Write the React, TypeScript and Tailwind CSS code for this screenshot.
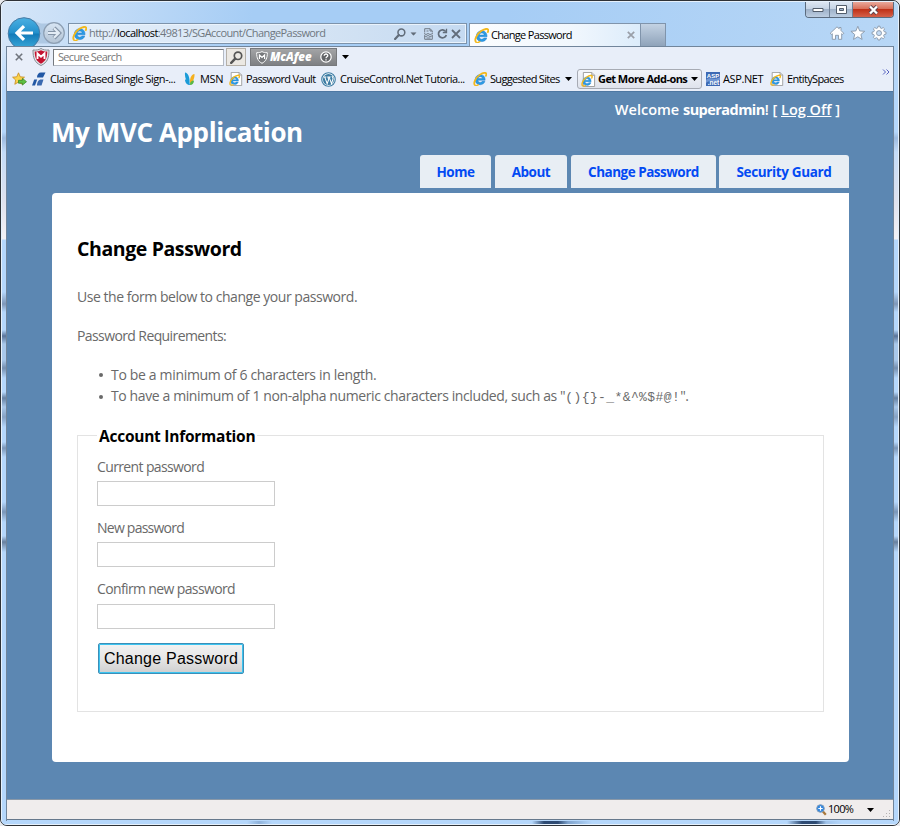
import React from "react";

function IeIcon({ s = 14, page = false }: { s?: number; page?: boolean }) {
  return (
    <svg width={s} height={s} viewBox="0 0 16 16" className="shrink-0">
      {page && <path d="M2.5.5h9l3 3v12h-12z" fill="#fff" stroke="#9a9a9a" />}
      {page && <path d="M11.5.5v3h3" fill="#ddd" stroke="#9a9a9a" />}
      <g transform={page ? "translate(0 3) scale(.78)" : ""}>
        <path d="M13.9 9.4H5.6c.1 1.6 1.2 2.5 2.7 2.5 1 0 1.8-.4 2.2-1.2h3.1c-.7 2.4-2.700 3.8-5.300 3.800-3.500 0-5.800-2.300-5.800-5.700S4.900 3 8.300 3c3.600 0 5.700 2.500 5.600 6.400zM5.700 7.400h5.100C10.700 6.100 9.700 5.300 8.300 5.300S5.900 6.100 5.700 7.400z" fill="#2b9be3" stroke="#1a78cc" strokeWidth=".5" />
        <path d="M2.300 15.200C-.2 12.800 3 6.300 8 3c3.500-2.300 6.800-2.700 7.200-.9.200.9-.3 2.100-1 3" fill="none" stroke="#f2b81c" strokeWidth="2" />
        <path d="M2.300 15.200c1 .7 2.700.2 4.400-.9" fill="none" stroke="#f2b81c" strokeWidth="1.500" />
      </g>
    </svg>
  );
}

function Caret({ c = "" }: { c?: string }) {
  return <svg width="7" height="4" viewBox="0 0 7 4" className={"shrink-0 " + c}><path d="M0 0h7L3.500 4z" fill="currentColor" /></svg>;
}

function Magnifier({ c = "", s = 13 }: { c?: string; s?: number }) {
  return (
    <svg width={s} height={s} viewBox="0 0 13 13" className={"shrink-0 " + c} fill="none" stroke="currentColor">
      <circle cx="8" cy="4.800" r="3.700" strokeWidth="1.700" />
      <path d="M5.200 7.600L1.200 11.800" strokeWidth="2.400" strokeLinecap="round" />
    </svg>
  );
}

function NavButtons() {
  return (
    <svg width="61" height="46" viewBox="0 0 61 46" className="shrink-0">
      <defs>
        <linearGradient id="back" x1="0" y1="0" x2="0" y2="1">
          <stop offset="0" stopColor="#4bb0e2" />
          <stop offset=".48" stopColor="#2390cc" />
          <stop offset=".52" stopColor="#137bb9" />
          <stop offset="1" stopColor="#3cabdb" />
        </linearGradient>
        <linearGradient id="fwd" x1="0" y1="0" x2="0" y2="1">
          <stop offset="0" stopColor="#d8e6f4" />
          <stop offset="1" stopColor="#b3c3d4" />
        </linearGradient>
      </defs>
      <path d="M17 16c9-1 12 5 18 5.500h18v20H17z" fill="#8aaaca" opacity=".45" />
      <circle cx="17" cy="31.500" r="15.800" fill="url(#back)" stroke="#467ba5" />
      <path d="M26 31H11M17 24.200L10 31l7 6.800" fill="none" stroke="#fff" strokeWidth="3.200" />
      <circle cx="47" cy="31" r="10.300" fill="url(#fwd)" stroke="#8d9fb3" strokeWidth="1.200" />
      <path d="M41 31h9M47 26l5 5-5 5" fill="none" stroke="#8494a7" strokeWidth="4.200" />
      <path d="M41 31h10M47 26.300l4.800 4.700-4.800 4.700" fill="none" stroke="#e3ecf5" strokeWidth="2.200" />
    </svg>
  );
}

function WindowControls() {
  return (
    <div className="flex h-[16px] w-[89px] overflow-hidden rounded-b-[4px] border border-t-0 border-[#5b6b7e]">
      <div className="flex w-[24px] items-center justify-center border-r border-[#6f8095] bg-[linear-gradient(#dce6f2_0%,#c5d3e4_45%,#9fb2c9_50%,#bccde1_100%)]">
        <svg width="12" height="6" viewBox="0 0 12 6"><path d="M1 1.500h10v3H1z" fill="#fff" stroke="#525d6b" /></svg>
      </div>
      <div className="flex w-[23px] items-center justify-center border-r border-[#6f8095] bg-[linear-gradient(#dce6f2_0%,#c5d3e4_45%,#9fb2c9_50%,#bccde1_100%)]">
        <svg width="11" height="9" viewBox="0 0 11 9"><path d="M.5.5h10v8H.5z" fill="#fff" stroke="#525d6b" /><path d="M3.500 3.500h4v2h-4z" fill="#9fb2c9" stroke="#525d6b" /></svg>
      </div>
      <div className="flex flex-1 items-center justify-center bg-[linear-gradient(#e9a99b_0%,#d9705a_45%,#bf3118_50%,#d5614a_100%)]">
        <svg width="11" height="10" viewBox="0 0 11 10"><path d="M2 1.500l7 7M9 1.500l-7 7" stroke="#5b4450" strokeWidth="4" /><path d="M2 1.500l7 7M9 1.500l-7 7" stroke="#fff" strokeWidth="2.300" /></svg>
      </div>
    </div>
  );
}

function CommandIcons() {
  return (
    <svg width="58" height="16" viewBox="0 0 58 16" fill="#fdfeff" stroke="#8896a8" strokeWidth=".9" strokeLinejoin="round">
      <path d="M1.200 8.300L8 1.800l2.200 2V2.500h1.800v3l2.800 2.800-1.300 1.100-.8-.7v5.600H9.500v-4h-3v4H3.300V8.700l-.8.700z" />
      <path d="M28.800 1.300l1.900 4.600 5 .4-3.800 3.200 1.200 4.900-4.300-2.600-4.300 2.600 1.200-4.900-3.800-3.200 5-.4z" />
      <path d="M49 1.200h2l.4 1.800 1.300.5 1.500-1 1.400 1.400-1 1.500.6 1.300 1.800.4v2l-1.800.4-.6 1.300 1 1.500-1.400 1.400-1.500-1-1.300.6-.4 1.700h-2l-.4-1.700-1.300-.6-1.500 1-1.400-1.400 1-1.500-.6-1.300-1.700-.4v-2l1.700-.4.6-1.300-1-1.500 1.400-1.400 1.500 1 1.300-.5z" />
      <circle cx="50" cy="8.100" r="2.500" fill="#c4dcf6" />
    </svg>
  );
}

function TitleBar() {
  return (
    <div className="flex h-[45px] items-start">
      <NavButtons />
      <div className="mt-[21px] flex h-[21px] w-[399px] items-center border border-[#7d93ab] bg-[linear-gradient(90deg,#e3eefa,#d5e4f4_60%,#c5daf1)] pl-[3px] shadow-[inset_0_0_0_1px_#eaf3fc]">
        <IeIcon s={15} />
        <span className="ml-[2px] w-[305px] whitespace-nowrap text-[11px] tracking-[-0.6px] text-[#6f7780]">
          http://<span className="text-black">localhost</span>:49813/SGAccount/ChangePassword
        </span>
        <Magnifier c="text-[#626d7a]" s={12} />
        <Caret c="ml-[4px] text-[#626d7a] scale-90" />
        <svg width="9" height="12" viewBox="0 0 9 12" className="ml-[7px] shrink-0" fill="none" stroke="#727c88"><path d="M.7 4.500V.7h5.500L8.300 3v1.500M.7 8v3.300h7.600V8M0 5.500l2 1 2-1 2 1 3-1M0 7.500l2 1 2-1 2 1 3-1M6 1v2h2M2.500 3h2M2.500 10h4" /></svg>
        <svg width="11" height="12" viewBox="0 0 11 12" className="ml-[4px] shrink-0" fill="none" stroke="#626d7a" strokeWidth="1.700"><path d="M8.800 3.600A4 4 0 1 0 9.300 7" /><path d="M9.500.8v3.700H5.800" strokeWidth="1.300" /></svg>
        <svg width="10" height="10" viewBox="0 0 10 10" className="ml-[3px] shrink-0" stroke="#626d7a" strokeWidth="1.800"><path d="M1 1l8 8M9 1L1 9" /></svg>
      </div>
      <div className="ml-[2px] mt-[21px] flex h-[23px] w-[172px] items-center border border-b-0 border-[#8094ab] bg-[linear-gradient(90deg,#fbfdff,#f1f7fd_60%,#dcecfb)] pl-[4px]">
        <IeIcon s={15} />
        <span className="ml-[2px] w-[136px] whitespace-nowrap text-[11px] tracking-[-0.68px] text-black">Change Password</span>
        <svg width="8" height="8" viewBox="0 0 8 8" className="shrink-0" stroke="#9a9fa8" strokeWidth="1.700"><path d="M.8.800l6.400 6.400M7.200.8L.8 7.200" /></svg>
      </div>
      <div className="mt-[21px] h-[23px] w-[25px] border border-b-0 border-l-0 border-[#8094ab] bg-[linear-gradient(#c3d2e3,#8fa3ba)]" />
      <div className="ml-auto flex flex-col items-end">
        <WindowControls />
        <div className="mr-[7px] mt-[7px] h-[16px]"><CommandIcons /></div>
      </div>
    </div>
  );
}

function SearchRow() {
  return (
    <div className="flex h-[20px] items-center">
      <svg width="8" height="8" viewBox="0 0 8 8" className="ml-[8px]" stroke="#70757d" strokeWidth="1.600"><path d="M.8.800l6.400 6.400M7.200.8L.8 7.200" /></svg>
      <svg width="18" height="18" viewBox="0 0 18 18" className="ml-[9px]">
        <path d="M9 .5c2 1.400 4.800 1.800 8 1.500 0 8-1.500 12.500-8 15.500C2.500 14.500 1 10 1 2c3.200.3 6-.1 8-1.500z" fill="#e2e4e8" stroke="#858a92" />
        <path d="M9 2.200c1.800 1 4 1.400 6.300 1.300-.2 6.300-1.600 9.700-6.300 12.200C4.300 13.200 2.900 9.800 2.700 3.500 5 3.600 7.200 3.200 9 2.200z" fill="#c3122f" />
        <path d="M5.500 11V5.500L9 8.800l3.500-3.300V11" fill="none" stroke="#fff" strokeWidth="1.900" />
      </svg>
      <div className="ml-[3px] flex h-[17px] w-[171px] items-center border border-[#b4bac4] border-l-[#75797f] border-t-[#75797f] bg-white pl-[4px] text-[11px] tracking-[-0.7px] text-[#777]">Secure Search</div>
      <div className="ml-[2px] flex h-[18px] w-[20px] items-center justify-center border border-[#b5b0a8] bg-[#ebe8e3]"><Magnifier c="text-[#555]" /></div>
      <div className="ml-[4px] flex h-[18px] w-[87px] items-center border border-[#77797c] bg-[linear-gradient(#a3a4a6,#7e8083)] pl-[5px]">
        <svg width="12" height="13" viewBox="0 0 12 13"><path d="M6 .6c1.500.9 3.200 1.200 5.300 1.100 0 5.500-1.300 8.500-5.300 10.600C2 10.200.7 7.200.7 1.700 2.800 1.800 4.500 1.500 6 .6z" fill="#77797c" stroke="#fff" /><path d="M3.400 8V4L6 6.500 8.600 4v4" fill="none" stroke="#fff" strokeWidth="1.200" /></svg>
        <span className="ml-[2px] w-[50px] whitespace-nowrap text-[11.500px] font-extrabold italic tracking-[-0.1px] text-white">McAfee</span>
        <svg width="12" height="12" viewBox="0 0 12 12"><circle cx="6" cy="6" r="5.200" fill="#626467" stroke="#fff" strokeWidth="1.200" /><path d="M4.200 4.700c0-2.300 3.700-2.200 3.600-.1C7.800 5.900 6 5.800 6 7.300M6 8.200v1.400" fill="none" stroke="#fff" strokeWidth="1.300" /></svg>
      </div>
      <Caret c="ml-[5px] text-black" />
    </div>
  );
}

function FavoritesRow() {
  return (
    <div className="flex h-[24px] items-center text-[11px] text-black">
      <svg width="15" height="14" viewBox="0 0 15 14" className="ml-[5px]"><path d="M6.500.8l1.700 4 4.300.4-3.200 2.800.9 4.300-3.700-2.300-3.700 2.300.9-4.300L.6 5.200l4.200-.4z" fill="#fbd34c" stroke="#c78a1b" strokeWidth=".8" /><path d="M6.500 8.300h4V6.400l4 3.300-4 3.400v-1.900h-4z" fill="#5fc043" stroke="#30831f" strokeWidth=".7" /></svg>
      <svg width="14" height="14" viewBox="0 0 14 14" className="ml-[5px]"><path d="M5 5.500C5 2.500 6.500.5 9 .5h4.500L11 5.500z" fill="#2157a4" /><path d="M0 13.500L2.200 7.500h3L3 13.500z" fill="#2157a4" /><path d="M5 13.500c0-4 2-6 4-6h2.500l-2 6z" fill="#3a69b0" /></svg>
      <span className="ml-[4px] w-[134px] whitespace-nowrap tracking-[-0.48px]">Claims-Based Single Sign-...</span>
      <svg width="12" height="14" viewBox="0 0 12 14"><path d="M1 .5c3 0 5 5 4.500 11C2.500 10 .5 5.500 1 .5z" fill="#1a9bd8" /><path d="M6 11.500C5.500 7 7 2.500 10.500 2 10.800 6 9 10 6 11.500z" fill="#f5b01e" /><path d="M1 7.500c2 0 4.500 2 5 5.500-2.500.3-5-2-5-5.500z" fill="#1a9bd8" /><path d="M6 13c-.3-3 1.500-4.500 4-4.500 0 2.500-1.500 4.500-4 4.500z" fill="#57b847" /></svg>
      <span className="ml-[4px] w-[29px] whitespace-nowrap tracking-[-0.4px]">MSN</span>
      <IeIcon s={14} page />
      <span className="ml-[3px] w-[75px] whitespace-nowrap tracking-[-0.65px]">Password Vault</span>
      <svg width="15" height="15" viewBox="0 0 16 16"><circle cx="8" cy="8" r="7.200" fill="#fff" stroke="#3a7ba3" strokeWidth="1.200" /><circle cx="8" cy="8" r="5.900" fill="#3a7ba3" /><path d="M2.700 5.300h3M4 5.500l2.600 7L8.200 8 7.300 5.300h3M8.700 5.500l2.500 7 1.600-5c.4-1.300-.9-2-1-3.300" fill="none" stroke="#fff" strokeWidth="1.100" /></svg>
      <span className="ml-[4px] w-[133px] whitespace-nowrap tracking-[-0.55px]">CruiseControl.Net Tutoria...</span>
      <IeIcon s={14} />
      <span className="ml-[3px] w-[75px] whitespace-nowrap tracking-[-0.7px]">Suggested Sites</span>
      <Caret />
      <div className="ml-[5px] flex h-[20px] w-[125px] items-center rounded-[3px] border border-[#a7abb4] bg-[linear-gradient(#f3f5fa,#dfe3ec)] pl-[3px]">
        <IeIcon s={15} page />
        <span className="ml-[2px] w-[93px] whitespace-nowrap font-bold tracking-[-0.56px]">Get More Add-ons</span>
        <Caret />
      </div>
      <svg width="14" height="14" viewBox="0 0 14 14" className="ml-[4px]"><path d="M0 0h14v14H0z" fill="#3c69b4" /><path d="M0 8c4-4 9 1 14-3v3C9 12 5 7 0 11z" fill="#6f95d2" /><text x="7" y="6" fontSize="6" fontWeight="700" fill="#fff" textAnchor="middle" className="font-['Liberation_Sans']">ASP</text><text x="7.500" y="12.500" fontSize="6.500" fontWeight="700" fill="#fff" textAnchor="middle" className="font-['Liberation_Sans']">.net</text></svg>
      <span className="ml-[3px] w-[47px] whitespace-nowrap tracking-[-0.4px]">ASP.NET</span>
      <IeIcon s={14} page />
      <span className="ml-[3px] whitespace-nowrap tracking-[-0.66px]">EntitySpaces</span>
      <svg width="8" height="6" viewBox="0 0 8 6" className="-mt-[15px] ml-auto mr-[3px]" fill="none" stroke="#5560c0"><path d="M1 .5L3.500 3 1 5.500M4.500.5L7 3 4.500 5.500" /></svg>
    </div>
  );
}

function Field({ label, c }: { label: string; c: string }) {
  return (
    <label className="block">
      <span className={"block h-[25px] whitespace-nowrap " + c}>{label}</span>
      <input type="password" className="block h-[25px] w-[178px] border border-[#ccc] bg-white outline-none" />
    </label>
  );
}

function Page() {
  return (
    <div className="h-[708px] border-t border-[#4e78a3] bg-[#5c87b2] pl-[45px] pr-[44px] font-['Open_Sans','Noto_Sans',sans-serif] text-[14px] text-[#696969]">
      <div className="flex h-[101px] justify-between text-white">
        <h1 className="-ml-px mt-[20px] h-[40px] whitespace-nowrap text-[26px] font-bold leading-[40px] tracking-[-0.4px]">My MVC Application</h1>
        <div className="flex w-[431px] flex-col items-end">
          <div className="mr-[9px] mt-[7px] h-[22px] whitespace-nowrap text-[14.500px] font-semibold leading-[22px]">
            Welcome <span className="font-bold tracking-[-0.55px]">superadmin</span>! [ <a className="underline">Log Off</a> ]
          </div>
          <nav className="mt-[34px] flex h-[33px] items-stretch gap-[4px] text-[13.500px] font-bold leading-[35px] tracking-[-0.5px] text-[#034af3] [&>a]:rounded-t-[3px] [&>a]:bg-[#e8eef4] [&>a]:text-center">
            <a className="w-[71px]">Home</a>
            <a className="w-[72px]">About</a>
            <a className="w-[145px]">Change Password</a>
            <a className="-ml-px w-[130px] tracking-[-0.36px]">Security Guard</a>
          </nav>
        </div>
      </div>
      <main className="h-[569px] rounded-[4px] rounded-tr-none bg-white px-[25px] pt-[41px]">
        <h2 className="h-[30px] whitespace-nowrap text-[19.500px] font-bold leading-[30px] tracking-[-0.4px] text-black">Change Password</h2>
        <p className="mt-[23px] h-[20px] whitespace-nowrap leading-[20px] tracking-[-0.46px]">Use the form below to change your password.</p>
        <p className="mt-[19px] h-[20px] whitespace-nowrap leading-[20px] tracking-[-0.6px]">Password Requirements:</p>
        <ul className="mt-[18px] pl-[22px] leading-[22px] [&>li]:flex [&>li]:h-[22px] [&>li]:items-center [&>li]:gap-[8px] [&>li]:whitespace-nowrap [&>li]:before:size-[4px] [&>li]:before:rounded-full [&>li]:before:bg-[#696969] [&>li]:before:content-['']">
          <li className="tracking-[-0.33px]">To be a minimum of 6 characters in length.</li>
          <li className="tracking-[-0.39px]">
            <span>
              To have a minimum of 1 non-alpha numeric characters included, such as &quot;<span className="font-['Liberation_Mono',monospace] text-[13px] tracking-[0.4px]">{"(){}-_*&^%$#@!"}</span>&quot;.
            </span>
          </li>
        </ul>
        <fieldset className="mt-[17px] h-[287px] border border-[#e3e3e3] pl-[19px]">
          <legend className="h-[20px] whitespace-nowrap px-[2px] text-[15.500px] font-bold leading-[22px] tracking-[-0.25px] text-black">Account Information</legend>
          <div className="mt-[11px]">
            <Field label="Current password" c="leading-[21px] tracking-[-0.63px]" />
            <div className="h-[11px]" />
            <Field label="New password" c="leading-[21px] tracking-[-0.76px]" />
            <div className="h-[12px]" />
            <Field label="Confirm new password" c="leading-[19px] tracking-[-0.63px]" />
          </div>
          <button className="ml-px mt-[14px] flex h-[31px] w-[146px] items-center justify-center whitespace-nowrap rounded-[2px] border border-[#3c8fb8] bg-[linear-gradient(#f2f2f2,#e6e6e6_50%,#cfcfcf)] font-['Liberation_Sans',sans-serif] text-[16px] tracking-[0.22px] text-black shadow-[inset_0_0_0_1px_#3cc4f0]">Change Password</button>
        </fieldset>
      </main>
    </div>
  );
}

function StatusBar() {
  return (
    <div className="flex h-[21px] items-center border-b border-t border-b-[#66788c] border-t-[#8b99a8] bg-[#f0eded] text-[11px] text-black">
      <svg width="11" height="12" viewBox="0 0 11 12" className="ml-[809px]"><path d="M6.500 7l3.300 3.800" stroke="#a8773a" strokeWidth="2.200" /><circle cx="4.500" cy="4.500" r="3.800" fill="#2f86e0" stroke="#7f9cbc" /><path d="M2.300 4.500h4.400M4.500 2.300v4.400" stroke="#fff" strokeWidth="1.200" /></svg>
      <span className="ml-px w-[39px] tracking-[-0.7px]">100%</span>
      <Caret />
      <svg width="8" height="8" viewBox="0 0 8 8" className="ml-auto mr-[2px] mt-[9px]" fill="#b5b2b2"><path d="M6 0h1v1H6zM3 3h1v1H3zM6 3h1v1H6zM0 6h1v1H0zM3 6h1v1H3zM6 6h1v1H6z" /></svg>
    </div>
  );
}

export default function App() {
  return (
    <div className="h-[826px] w-[900px] overflow-hidden bg-[#e8eaee] font-['Open_Sans','Noto_Sans',sans-serif]">
      <div className="h-full w-full rounded-[7px] border border-[#2e3237] bg-[linear-gradient(100deg,#d6e6f8_0,#a6cdf5_250px,#a6cdf5_500px,#b8d7f6_900px)]">
        <div className="h-full rounded-[6px] border border-[#e6f1fc] bg-[linear-gradient(transparent_0,transparent_46px,#b5d7fb_90px,#b5d7fb_130px,#9dbbe0_136px,#c4dcf8_150px,#dfe2ee_200px,#f3f2f6_237px,#b5d7fb_238px,#b5d7fb_290px,#7e97b8_302px,#b5d7fb_310px,#b5d7fb_328px,#59749a_334px,#a9c8ea_342px,#a9c8ea_358px,#748fb0_366px,#b5d7fb_376px,#b5d7fb_390px,#6682a4_396px,#a9c8ea_405px,#86a2c4_415px,#b5d7fb_425px,#b5d7fb_440px,#7a96b8_446px,#b5d7fb_455px,#b5d7fb_500px,#7a96b8_510px,#b5d7fb_520px,#b5d7fb_534px,#68809e_540px,#b5d7fb_550px,#b5d7fb)] px-[4px]">
          <div className="flex h-[819px] flex-col">
            <div className="ml-px w-[887px]"><TitleBar /></div>
            <div className="-mt-px flex-1 border-x border-t border-[#71859b]">
              <div className="bg-[#e8eef9]">
                <SearchRow />
                <FavoritesRow />
              </div>
              <Page />
              <StatusBar />
            </div>
          </div>
          <div className="-mx-[4px] h-[3px] rounded-b-[5px] bg-[linear-gradient(90deg,#b5d7fb_0,#b5d7fb_245px,#8fb2da_257px,#b5d7fb_270px,#b5d7fb_530px,#2d4a72_542px,#2d4a72_556px,#7fa3cd_566px,#b5d7fb_590px,#b5d7fb_785px,#2d4a72_800px,#2d4a72_814px,#a0c3ea_824px,#b5d7fb_840px)]" />
        </div>
      </div>
    </div>
  );
}
